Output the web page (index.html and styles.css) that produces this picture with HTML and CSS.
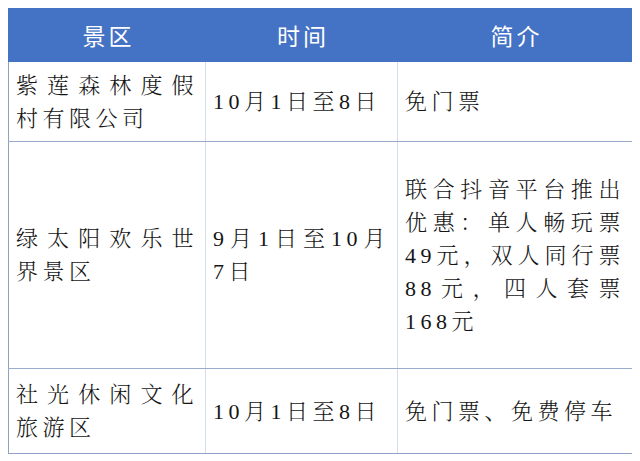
FILE: index.html
```html
<!DOCTYPE html>
<html lang="zh-CN">
<head>
<meta charset="utf-8">
<title>景区</title>
<link rel="stylesheet" href="styles.css">
</head>
<body>
<table class="sheet">
  <colgroup>
    <col class="c1">
    <col class="c2">
    <col class="c3">
  </colgroup>
  <thead>
    <tr class="r-head">
      <th>景区</th>
      <th>时间</th>
      <th>简介</th>
    </tr>
  </thead>
  <tbody>
    <tr class="r1">
      <td>紫莲森林度假村有限公司</td>
      <td>10月1日至8日</td>
      <td>免门票</td>
    </tr>
    <tr class="r2">
      <td>绿太阳欢乐世界景区</td>
      <td>9月1日至10月7日</td>
      <td>联合抖音平台推出优惠：单人畅玩票49元，双人同行票88元，四人套票168元</td>
    </tr>
    <tr class="r3">
      <td>社光休闲文化旅游区</td>
      <td>10月1日至8日</td>
      <td>免门票、免费停车</td>
    </tr>
  </tbody>
</table>
</body>
</html>
```

FILE: styles.css
```css
html, body {
  background: #ffffff;
}
body {
  margin: 8px;
}
.sheet {
  border-collapse: collapse;
  table-layout: fixed;
  width: 624px;
}
.c1 { width: 197px; }
.c2 { width: 192px; }
.c3 { width: 235px; }

.r-head { height: 53px; }
.r1 { height: 80px; }
.r2 { height: 227px; }
.r3 { height: 85px; }

.sheet th {
  background: #4472c4;
  color: #ffffff;
  font-family: "Noto Sans CJK SC", "Noto Sans", sans-serif;
  font-weight: 400;
  font-size: 23px;
  letter-spacing: 3px;
  text-align: center;
  vertical-align: middle;
  padding: 0 0 0 3px;
  border: 1px solid #4472c4;
}
.sheet td {
  font-family: "Liberation Serif", "Noto Serif CJK SC", "Noto Sans CJK SC", serif;
  font-weight: 300;
  font-size: 22px;
  line-height: 33px;
  letter-spacing: 4.5px;
  color: #151515;
  text-align: justify;
  text-justify: inter-character;
  vertical-align: middle;
  padding: 0 7px 0 7px;
  border-top: 1px solid #9aabcb;
  border-bottom: 1px solid #9aabcb;
  border-left: 1px solid #d5dcea;
  border-right: 1px solid #d5dcea;
}
.sheet td:first-child {
  border-left: 1px solid #8fa2c6;
}
.sheet td:last-child {
  border-right: 1px solid #8fa2c6;
}
.sheet tbody tr:last-child td {
  border-bottom: 1px solid #8fa2c6;
}
```
